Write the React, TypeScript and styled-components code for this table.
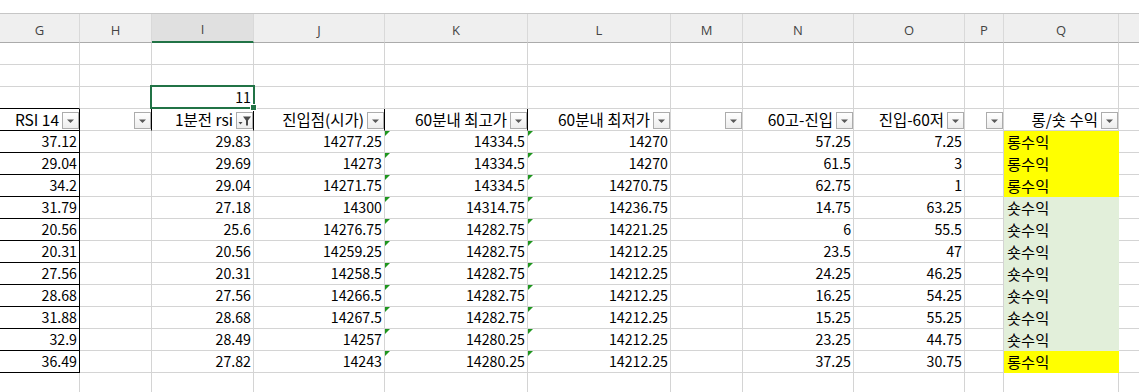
import React from 'react';
import styled, { createGlobalStyle } from 'styled-components';

const GlobalStyle = createGlobalStyle`
  html, body { margin: 0; padding: 0; background: #ffffff; overflow: hidden; }
  body { font-family: "Noto Sans CJK KR", "Noto Sans", sans-serif; }
`;

const COLS = '80px 72px 102px 131px 143px 143px 72px 111px 111px 39px 115px 1fr';
const GRID = '#d4d4d4';
const BLACK = '#000000';
const GREEN = '#217346';

const Sheet = styled.div`
  width: 1160px;
  height: 392px;
  overflow: hidden;
  background: #ffffff;
`;

const TopStrip = styled.div`
  height: 13px;
  background: #ffffff;
`;

const HeaderBand = styled.div`
  display: grid;
  grid-template-columns: ${COLS};
  height: 30px;
  box-sizing: border-box;
  border-top: 1px solid #c6c6c6;
  background: #efefef;
`;

const ColLetter = styled.div<{ $sel?: boolean }>`
  display: flex;
  align-items: center;
  justify-content: center;
  box-sizing: border-box;
  padding-top: 3px;
  border-right: 1px solid #d9d9d9;
  border-bottom: ${p => (p.$sel ? `2px solid ${GREEN}` : '1px solid #ababab')};
  background: ${p => (p.$sel ? '#e0e0e0' : 'transparent')};
  font-family: "Open Sans", "Noto Sans", sans-serif;
  font-size: 13px;
  color: #444444;
`;

const Row = styled.div`
  display: grid;
  grid-template-columns: ${COLS};
  height: 22px;
`;

type CellProps = {
  $align?: 'left' | 'right';
  $fill?: string;
  $right?: string;
  $bottom?: string;
  $head?: boolean;
};

const Cell = styled.div<CellProps>`
  position: relative;
  box-sizing: border-box;
  height: 22px;
  min-width: 0;
  display: flex;
  align-items: flex-end;
  justify-content: ${p => (p.$align === 'left' ? 'flex-start' : 'flex-end')};
  padding: ${p => (p.$head ? '0' : p.$align === 'left' ? '0 2px 0 3px' : '0 2px 0 2px')};
  border-right: 1px solid ${p => p.$fill ?? p.$right ?? GRID};
  border-bottom: 1px solid ${p => p.$fill ?? p.$bottom ?? GRID};
  background: ${p => p.$fill ?? 'transparent'};
  font-size: 14px;
  line-height: 21px;
  color: #000000;
  white-space: nowrap;
`;

const Num = styled.span`
  font-size: 14.2px;
`;

const Label = styled.span`
  font-size: 15.3px;
  line-height: 21px;
`;

const ErrorMark = styled.span`
  position: absolute;
  top: 0;
  left: 0;
  width: 0;
  height: 0;
  border-top: 5px solid #1e961e;
  border-right: 5px solid transparent;
`;

const Selection = styled.div`
  position: absolute;
  left: -2px;
  top: -2px;
  right: -2px;
  bottom: -1px;
  border: 2px solid ${GREEN};
  pointer-events: none;
  z-index: 2;
`;

const FillHandle = styled.div`
  position: absolute;
  right: -4px;
  bottom: -3px;
  width: 5px;
  height: 5px;
  background: ${GREEN};
  border: 1px solid #ffffff;
  z-index: 3;
`;

const HeadText = styled.span`
  margin-right: 3px;
  font-size: 15.5px;
  line-height: 21px;
`;

const FilterBtn = styled.span`
  flex: none;
  width: 17px;
  height: 17px;
  box-sizing: border-box;
  margin-bottom: 1px;
  border: 1px solid #acacac;
  background: linear-gradient(#ffffff, #ededed);
  display: flex;
  align-items: center;
  justify-content: center;
`;

const DropArrow = () => (
  <svg width="9" height="6" viewBox="0 0 9 6">
    <polygon points="1,1.5 8,1.5 4.5,5" fill="#595959" />
  </svg>
);

const FunnelIcon = () => (
  <svg width="15" height="15" viewBox="0 0 15 15">
    <polygon points="1.5,9 5.5,9 3.5,11.5" fill="#4a4a4a" />
    <polygon points="6,3.5 14,3.5 11,7.5 11,12.5 9,12.5 9,7.5" fill="#4a4a4a" />
  </svg>
);

const LETTERS = ['G', 'H', 'I', 'J', 'K', 'L', 'M', 'N', 'O', 'P', 'Q', ''];

type Header = { text: string; funnel?: boolean; right?: string };
const HEADERS: Header[] = [
  { text: 'RSI 14', right: BLACK },
  { text: '', right: BLACK },
  { text: '1분전 rsi', funnel: true, right: BLACK },
  { text: '진입점(시가)', right: BLACK },
  { text: '60분내 최고가', right: BLACK },
  { text: '60분내 최저가' },
  { text: '' },
  { text: '60고-진입' },
  { text: '진입-60저' },
  { text: '' },
  { text: '롱/숏 수익' },
];

const YELLOW = '#ffff00';
const LIGHTGREEN = '#e2efda';

type DataRow = {
  g: string; i: string; j: string; k: string; l: string; n: string; o: string; q: '롱수익' | '숏수익';
};

const DATA: DataRow[] = [
  { g: '37.12', i: '29.83', j: '14277.25', k: '14334.5', l: '14270', n: '57.25', o: '7.25', q: '롱수익' },
  { g: '29.04', i: '29.69', j: '14273', k: '14334.5', l: '14270', n: '61.5', o: '3', q: '롱수익' },
  { g: '34.2', i: '29.04', j: '14271.75', k: '14334.5', l: '14270.75', n: '62.75', o: '1', q: '롱수익' },
  { g: '31.79', i: '27.18', j: '14300', k: '14314.75', l: '14236.75', n: '14.75', o: '63.25', q: '숏수익' },
  { g: '20.56', i: '25.6', j: '14276.75', k: '14282.75', l: '14221.25', n: '6', o: '55.5', q: '숏수익' },
  { g: '20.31', i: '20.56', j: '14259.25', k: '14282.75', l: '14212.25', n: '23.5', o: '47', q: '숏수익' },
  { g: '27.56', i: '20.31', j: '14258.5', k: '14282.75', l: '14212.25', n: '24.25', o: '46.25', q: '숏수익' },
  { g: '28.68', i: '27.56', j: '14266.5', k: '14282.75', l: '14212.25', n: '16.25', o: '54.25', q: '숏수익' },
  { g: '31.88', i: '28.68', j: '14267.5', k: '14282.75', l: '14212.25', n: '15.25', o: '55.25', q: '숏수익' },
  { g: '32.9', i: '28.49', j: '14257', k: '14280.25', l: '14212.25', n: '23.25', o: '44.75', q: '숏수익' },
  { g: '36.49', i: '27.82', j: '14243', k: '14280.25', l: '14212.25', n: '37.25', o: '30.75', q: '롱수익' },
];

const EmptyRow = ({ gBottom }: { gBottom?: string }) => (
  <Row>
    {LETTERS.map((_, idx) => (
      <Cell key={idx} $bottom={idx === 0 ? gBottom : undefined} />
    ))}
  </Row>
);

export default function App() {
  return (
    <Sheet>
      <GlobalStyle />
      <TopStrip />
      <HeaderBand>
        {LETTERS.map((l, idx) => (
          <ColLetter key={idx} $sel={l === 'I'}>
            {l}
          </ColLetter>
        ))}
      </HeaderBand>

      <EmptyRow />
      <EmptyRow />
      <Row>
        <Cell $bottom={BLACK} />
        <Cell />
        <Cell>
          <Num>11</Num>
          <Selection />
          <FillHandle />
        </Cell>
        {LETTERS.slice(3).map((_, idx) => (
          <Cell key={idx} />
        ))}
      </Row>

      <Row>
        {HEADERS.map((h, idx) => (
          <Cell key={idx} $head $right={h.right} $bottom={idx === 0 ? BLACK : undefined}>
            {h.text && <HeadText>{h.text}</HeadText>}
            <FilterBtn>{h.funnel ? <FunnelIcon /> : <DropArrow />}</FilterBtn>
          </Cell>
        ))}
        <Cell />
      </Row>

      {DATA.map((d, r) => (
        <Row key={r}>
          <Cell $right={BLACK} $bottom={BLACK}>
            <Num>{d.g}</Num>
          </Cell>
          <Cell />
          <Cell>
            <Num>{d.i}</Num>
          </Cell>
          <Cell>
            <Num>{d.j}</Num>
          </Cell>
          <Cell>
            <ErrorMark />
            <Num>{d.k}</Num>
          </Cell>
          <Cell>
            <ErrorMark />
            <Num>{d.l}</Num>
          </Cell>
          <Cell />
          <Cell>
            <Num>{d.n}</Num>
          </Cell>
          <Cell>
            <Num>{d.o}</Num>
          </Cell>
          <Cell />
          <Cell $align="left" $fill={d.q === '롱수익' ? YELLOW : LIGHTGREEN}>
            <Label>{d.q}</Label>
          </Cell>
          <Cell />
        </Row>
      ))}

      <EmptyRow />
    </Sheet>
  );
}
